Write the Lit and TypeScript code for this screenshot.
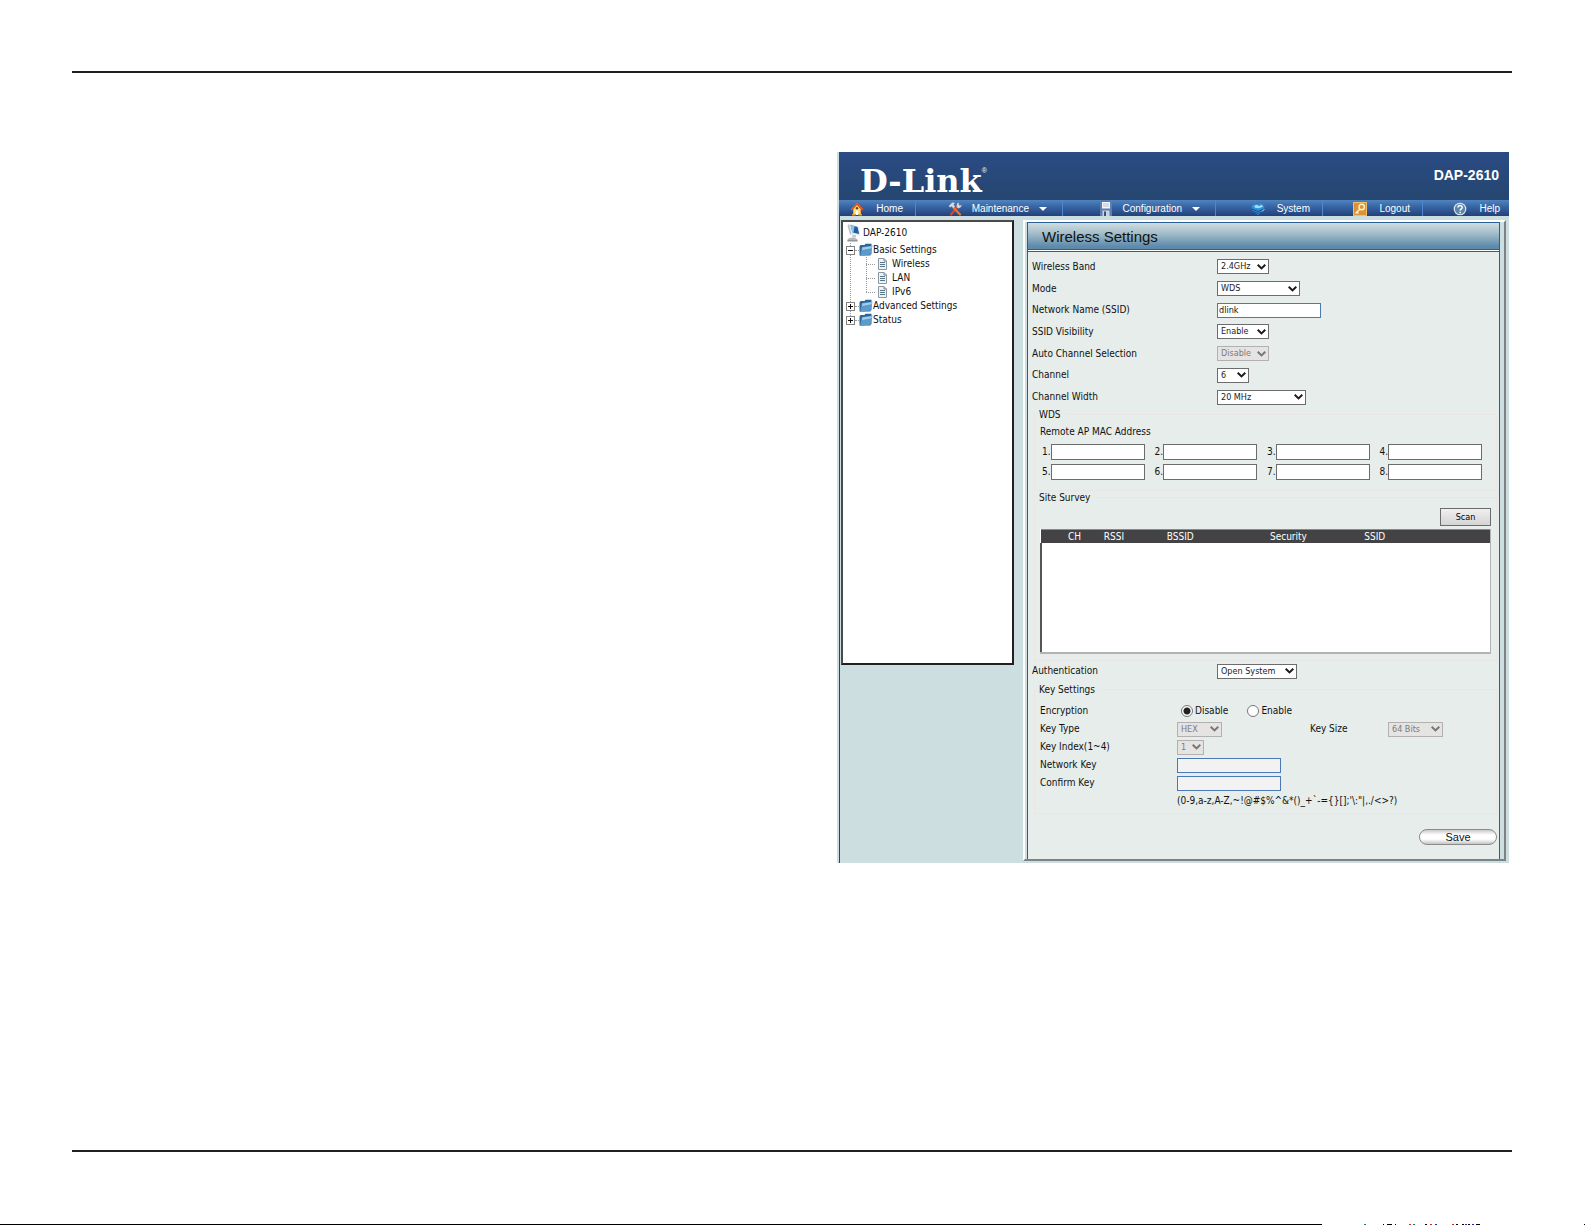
import { LitElement, html, css, svg, nothing } from "lit";
import { customElement, property } from "lit/decorators.js";

const icons = {
  home: svg`<path d="M7 0.5 1 7h2v5h8V7h2z" fill="#e8762c"/><path d="M7 3 3.5 7v5h7V7z" fill="#f8e06a"/><path d="M7 .6 .6 7.200l1.200 1.200L7 3l5.200 5.400 1.200-1.200z" fill="#e2552c"/><circle cx="7" cy="6.200" r="1.200" fill="#7a3a1c"/><path d="M5.700 8.500h2.600V13H5.700z" fill="#fff"/><path d="M2 12h3.700v1.400H2zM8.300 12H12v1.400H8.300z" fill="#e8a23c"/>`,
  tools: svg`<path d="M10.500 3.500 3 12.500" stroke="#d8432a" stroke-width="2.200" stroke-linecap="round"/><path d="m4 4 8 8.500" stroke="#e8762c" stroke-width="2.200" stroke-linecap="round"/><path d="m.8 4 3.500-3.500L7 1 5.500 2.500 7 4.500 5.500 6 3.500 4 2 5.500z" fill="#d8dde2"/><path d="m8.500 5 .5-3.500 2-1-.3 2L12 3.500l1.700-.7-.7 2.200-2.500 1.500z" fill="#cfd6dc"/>`,
  disk: svg`<path d="M1 0h12v14H1z" fill="#5b7fb5"/><path d="M3 0h8v6.500H3z" fill="#f2f4f6"/><path d="M4 2h6M4 4h6" stroke="#b8c2cc"/><path d="M3.500 8.500h7V14h-7z" fill="#d0d4d8"/><path d="M5 9.500h2V14H5z" fill="#34507c"/>`,
  system: svg`<path d="M.5 4 4.500 1.500l2.500 1 3.500-1.500 3 3-1 5L7 13 2 9.500z" fill="#2f8fd4"/><path d="M3 4 6 2.800l2 1.500 2.500-1.500 1.500 2-4 1.500-4-.5z" fill="#a6dcf6"/><path d="m1 7 6 2.500L13 7M2.500 9.500l4.500 2 4.500-2" stroke="#174f96" fill="none"/><path d="M11 9.500 13.500 7" stroke="#a6dcf6"/>`,
  key: svg`<path d="M0 0h14v14H0z" fill="#dd9330"/><path d="M.5 .5h13v13H.5z" fill="none" stroke="#f3bf6d"/><circle cx="8.700" cy="5" r="2.700" fill="none" stroke="#fff3d8" stroke-width="1.400"/><path d="m7 7-4.500 4.500M4 10l1.500 1.500" stroke="#fff3d8" stroke-width="1.400"/>`,
  help: svg`<circle cx="7" cy="7" r="6.300" fill="#e4edf4"/><circle cx="7" cy="7" r="5.200" fill="#5d86ab"/><path d="M5 5.500C5 3 9.200 3 9.200 5.400 9.200 7 7.200 6.800 7.200 8.600M7.200 9.800v1.500" stroke="#fff" stroke-width="1.500" fill="none"/>`,
  computer: svg`<path d="m2 0 9.500 2.500L13.500 12l-9-2z" fill="#e4ecf2"/><path d="m3.500 1 7 2 1.700 7L5.500 8.500z" fill="#1f5f9f"/><path d="m3.500 1 4 1.200-1 6.500-1-.2z" fill="#8fc4ea"/><path d="m.5 1.500 1.500-1.500 2.500 10-1.500 1z" fill="#b4c4d2"/><path d="m5 10.500 4 1v2l-3.500-.5z" fill="#c2c6ca"/><path d="M.5 15.500C2 13 8 12.500 10.500 15.500V17H.5z" fill="#b4b8bc"/><path d="M.5 16h10v1.500H.5z" fill="#90969c"/>`,
  folder: svg`<path d="M.5 3.500 1.500 2h4l1-1.200h6V11L11 12.500H.5z" fill="#2c6595"/><path d="M3 4 13.500 2.500 11.500 11.800 1 13z" fill="#5b9aca"/><path d="M3.500 4.600 13 3.200l-.4 2L3 7z" fill="#a3cdea"/>`,
  page: svg`<path d="M1.500 .5h5.500L9.500 3v8.500h-8z" fill="#eef2f5" stroke="#8b98a4"/><path d="M7 .5V3h2.500" fill="none" stroke="#7b8894"/><path d="M3 4.500h5M3 6.500h5M3 8.500h5" stroke="#5a7488"/>`,
};

const UI = css`"DejaVu Sans Condensed", "DejaVu Sans", sans-serif`;

@customElement("ui-select")
class UiSelect extends LitElement {
  @property() value = "";
  @property() label = "";
  @property({ type: Boolean }) disabled = false;
  static styles = css`
    :host { display: inline-grid; grid-template: 15px / 100%; align-items: center; }
    select { grid-area: 1 / 1; width: 100%; height: 15px; box-sizing: border-box; appearance: none; margin: 0;
      padding: 0 0 0 3px; border: 1px solid #6c6c6c; border-radius: 0; background: #fff; color: #222;
      font: 9px/13px ${UI}; }
    select:disabled { background: #e6e4e3; border-color: #b2b0b0; color: #7b7b7b; opacity: 1; }
    svg { grid-area: 1 / 1; justify-self: end; margin-right: 3px; width: 9px; height: 6px; pointer-events: none; fill: none; stroke: #1c1c1c; stroke-width: 2; }
    :host([disabled]) svg { stroke: #777; }
  `;
  render() {
    return html`<select aria-label=${this.label} ?disabled=${this.disabled}><option>${this.value}</option></select>
      <svg viewBox="0 0 9 6"><path d="M.7 .7 4.500 4.400 8.300 .7" /></svg>`;
  }
}

@customElement("app-nav")
class AppNav extends LitElement {
  static styles = css`
    :host { display: block; }
    nav { display: grid; grid-template-columns: 77fr 147fr 153fr 107fr 100fr 86fr; height: 16px;
      background: linear-gradient(#5284c0, #3767a5 40%, #24407a); font: 10px/14px "Liberation Sans", Arial, sans-serif; }
    a { display: flex; align-items: center; justify-content: flex-end; gap: 12px; padding: 1px 12px 0 0; color: #fff; text-decoration: none;
      border-right: 1px solid #4f86cf; box-sizing: border-box; }
    a:last-child { border: 0; padding-right: 9px; }
    a.menu { padding-right: 15px; gap: 10px; }
    svg { width: 14px; height: 14px; }
    .caret { border: 4px solid transparent; border-top-color: #fff; border-bottom: 0; }
  `;
  render() {
    const items: [string, unknown, boolean][] = [
      ["Home", icons.home, false], ["Maintenance", icons.tools, true], ["Configuration", icons.disk, true],
      ["System", icons.system, false], ["Logout", icons.key, false], ["Help", icons.help, false],
    ];
    return html`<nav>${items.map(([name, icon, menu]) => html`
      <a href="#" class=${menu ? "menu" : ""}><svg viewBox="0 0 14 14">${icon}</svg><span>${name}</span>${menu ? html`<i class="caret"></i>` : nothing}</a>`)}</nav>`;
  }
}

@customElement("app-tree")
class AppTree extends LitElement {
  static styles = css`
    :host { display: block; box-sizing: border-box; background: #fff; border: 2px solid #231f20; border-top-color: #4a4a4a; border-left-color: #4a4a4a;
      padding: 1px 3px; font: 10px/14px ${UI}; color: #111; }
    ul { list-style: none; margin: 0; padding: 0; }
    .root { display: flex; align-items: center; height: 20px; gap: 2px; padding-left: 1px; }
    .root svg { width: 14px; height: 18px; }
    .level { background: repeating-linear-gradient(#999 0 1px, transparent 1px 2px) 4px 0 / 1px calc(100% - 7px) no-repeat; }
    .row { display: flex; align-items: center; height: 14px; }
    .box { width: 9px; height: 9px; box-sizing: border-box; border: 1px solid #848484; padding: 0; background: #fff; display: grid; place-items: center; }
    .box svg { width: 5px; height: 5px; stroke: #111; }
    .dash { width: 4px; border-top: 1px dotted #999; }
    .row > svg { width: 14px; height: 14px; }
    a { color: inherit; text-decoration: none; }
    .leaves { margin-left: 20px; background: repeating-linear-gradient(#999 0 1px, transparent 1px 2px) 0 0 / 1px calc(100% - 7px) no-repeat; }
    .leaves li { display: flex; align-items: center; height: 14px; }
    .leaves .dash { width: 9px; margin-right: 2px; }
    .leaves svg { width: 11px; height: 12px; margin-right: 4px; }
  `;
  private branch(name: string, leaves: string[] = []) {
    return html`<li>
      <div class="row">
        <button class="box" aria-label=${"Toggle " + name}><svg viewBox="0 0 5 5"><path d=${leaves.length ? "M0 2.500h5" : "M0 2.500h5M2.500 0v5"} /></svg></button>
        <span class="dash"></span><svg viewBox="0 0 14 14">${icons.folder}</svg><a href="#">${name}</a>
      </div>
      ${leaves.length ? html`<ul class="leaves">${leaves.map((l) => html`<li><span class="dash"></span><svg viewBox="0 0 11 12">${icons.page}</svg><a href="#">${l}</a></li>`)}</ul>` : nothing}
    </li>`;
  }
  render() {
    return html`<div class="root"><svg viewBox="0 0 14 18">${icons.computer}</svg><a href="#">DAP-2610</a></div>
      <ul class="level">${this.branch("Basic Settings", ["Wireless", "LAN", "IPv6"])}${this.branch("Advanced Settings")}${this.branch("Status")}</ul>`;
  }
}

@customElement("wireless-settings")
class WirelessSettings extends LitElement {
  static styles = css`
    :host { display: block; box-sizing: border-box; border: 2px solid; border-color: #fff #7d8385 #7d8385 #fff; padding: 0 4px 0 2px;
      font: 10px/12px ${UI}; color: #111; }
    form { margin: 0; background: #e6edea; border: solid #2a5f95; border-width: 0 1px; box-sizing: border-box; padding-bottom: 14px; }
    h1 { margin: 0; border-top: 1px solid #2a5f95; border-bottom: 3px double #2a5f95; padding: 1px 0 0 14px;
      font: 15px/25px "Liberation Sans", Arial, sans-serif; background: linear-gradient(#cfdde0, #a9c2cd 35%, #5e8bab 90%) padding-box, #fff; }
    .fields { display: grid; grid-auto-rows: 1fr; min-height: 152px; padding: 4px 0 0 4px; }
    .field { display: grid; grid-template-columns: 185px 1fr; align-items: center; }
    .auth { height: 20px; padding-left: 4px; }
    .w27 { width: 27px; } .w32 { width: 32px; } .w45 { width: 45px; } .w52 { width: 52px; } .w55 { width: 55px; }
    .w80 { width: 80px; } .w83 { width: 83px; } .w89 { width: 89px; } .w104 { width: 104px; }
    input:not([type="radio"]) { box-sizing: border-box; height: 15px; margin: 0; padding: 0 1px; border: 1px solid #4a79b5; border-radius: 0; background: #fff; color: #111; font: 9px/13px ${UI}; }
    input:disabled:not([type="radio"]) { background: #f2f2f2; }
    fieldset { margin: 0 2px 0 6px; padding: 0 5px; border: 1px solid #e9e6e5; min-width: 0; }
    legend { padding: 1px 4px 0 3px; margin-left: -4px; }
    .remote { margin: 5px 0 6px; }
    .macs { display: grid; grid-template-columns: repeat(4, minmax(0, 1fr)); gap: 4px 10px; padding: 0 9px 10px 2px; }
    .mac { display: flex; align-items: center; min-width: 0; }
    .mac input:not([type="radio"]) { flex: 1; width: 0; min-width: 0; height: 16px; border-color: #6c6c6c; }
    .survey { display: flex; flex-direction: column; gap: 3px; padding: 4px 0 6px; }
    .scan { align-self: flex-end; width: 51px; height: 18px; box-sizing: border-box; border: 1px solid #6c6c6c; border-radius: 0; padding: 0; background: linear-gradient(#f0f0f0, #d4d4d4); font: 9px/14px ${UI}; }
    .results { height: 125px; box-sizing: border-box; background: #fff; border: solid #b3b3b3; border-width: 0 1px 2px 0; }
    table { width: 100%; height: 100%; border-collapse: collapse; table-layout: fixed; }
    th { height: 13px; padding: 0; background: #434345; border-top: 1px solid #8a8a8a; color: #fff; font-weight: 400; line-height: 12px; text-align: left; }
    td { padding: 0; border-left: 2px solid #555; }
    .key { display: grid; grid-template-columns: 137px 211px 1fr; grid-auto-rows: 18px; align-items: center; padding: 6px 0 3px; }
    .keys { margin-top: 2px; }
    .size { display: flex; align-items: center; justify-content: space-between; }
    .sizelabel { width: 78px; }
    .radios { display: flex; gap: 19px; padding-left: 4px; }
    .radios label { display: flex; align-items: center; gap: 2px; }
    input[type="radio"] { appearance: none; width: 12px; height: 12px; margin: 0; box-sizing: border-box; border: 1px solid #777; border-radius: 50%; background: #fff; }
    input[type="radio"]:checked { background: radial-gradient(circle, #222 0 3px, #fff 4px); }
    .hint { grid-column: 2 / -1; white-space: nowrap; }
    .actions { display: flex; justify-content: flex-end; padding: 15px 2px 0 0; }
    .save { width: 78px; height: 16px; box-sizing: border-box; border: 1px solid #8b8b8b; border-radius: 8px; padding: 0; color: #111;
      background: linear-gradient(#c9c9c9, #fff 35%, #fff 65%, #c4c4c4); font: 11px/14px "Liberation Sans", Arial, sans-serif; }
  `;
  private pick(label: string, value: string, w: string, disabled = false) {
    return html`<div class="field"><span>${label}</span><ui-select class=${w} .label=${label} .value=${value} ?disabled=${disabled}></ui-select></div>`;
  }
  render() {
    return html`<form>
      <h1>Wireless Settings</h1>
      <div class="fields">
        ${this.pick("Wireless Band", "2.4GHz", "w52")}
        ${this.pick("Mode", "WDS", "w83")}
        <div class="field"><label for="ssid">Network Name (SSID)</label><input id="ssid" class="w104" value="dlink" /></div>
        ${this.pick("SSID Visibility", "Enable", "w52")}
        ${this.pick("Auto Channel Selection", "Disable", "w52", true)}
        ${this.pick("Channel", "6", "w32")}
        ${this.pick("Channel Width", "20 MHz", "w89")}
      </div>
      <fieldset>
        <legend>WDS</legend>
        <div class="remote">Remote AP MAC Address</div>
        <div class="macs">${[1, 2, 3, 4, 5, 6, 7, 8].map((n) => html`<label class="mac">${n}.<input /></label>`)}</div>
      </fieldset>
      <fieldset>
        <legend>Site Survey</legend>
        <div class="survey">
          <button type="button" class="scan">Scan</button>
          <div class="results"><table>
            <colgroup><col width="6%" /><col width="8%" /><col width="14%" /><col width="23%" /><col width="21%" /><col /></colgroup>
            <thead><tr><th></th><th>CH</th><th>RSSI</th><th>BSSID</th><th>Security</th><th>SSID</th></tr></thead>
            <tbody><tr><td colspan="6"></td></tr></tbody>
          </table></div>
        </div>
      </fieldset>
      <div class="field auth"><span>Authentication</span><ui-select class="w80" label="Authentication" value="Open System"></ui-select></div>
      <fieldset class="keys">
        <legend>Key Settings</legend>
        <div class="key">
          <span>Encryption</span>
          <div class="radios"><label><input type="radio" name="enc" checked />Disable</label><label><input type="radio" name="enc" />Enable</label></div><span></span>
          <span>Key Type</span>
          <div class="size"><ui-select class="w45" label="Key Type" value="HEX" disabled></ui-select><span class="sizelabel">Key Size</span></div>
          <ui-select class="w55" label="Key Size" value="64 Bits" disabled></ui-select>
          <span>Key Index(1~4)</span><ui-select class="w27" label="Key Index" value="1" disabled></ui-select><span></span>
          <label for="nk">Network Key</label><input id="nk" class="w104" disabled /><span></span>
          <label for="ck">Confirm Key</label><input id="ck" class="w104" disabled /><span></span>
          <span class="hint">${"(0-9,a-z,A-Z,~!@#$%^&*()_+`-={}[];'\\:\"|,./<>?)"}</span>
        </div>
      </fieldset>
      <div class="actions"><button type="button" class="save">Save</button></div>
    </form>`;
  }
}

@customElement("app-root")
class AppRoot extends LitElement {
  static styles = css`
    :host { display: flex; flex-direction: column; box-sizing: border-box; min-height: 100vh; padding-top: 71px; background: #fff; }
    .rule { margin: 0 73px 0 72px; border: 0; border-top: 2px solid #231f20; }
    .page { flex: 1; display: grid; grid-template-columns: 765fr 672fr; align-items: start; padding: 79px 76px 0 72px; }
    .device { grid-column: 2; background: #cddee1; padding-left: 2px; }
    header { display: flex; justify-content: space-between; align-items: flex-start; height: 48px; box-sizing: border-box; padding: 11px 10px 0 21px;
      background: linear-gradient(#2b4b85, #24466f); color: #fff; }
    .logo { display: flex; font: bold 32px/36px "DejaVu Serif", "Liberation Serif", serif; }
    .reg { font: 7px/16px "Liberation Sans", sans-serif; }
    .model { font: bold 14px/24px "Liberation Sans", Arial, sans-serif; }
    .body { display: grid; grid-template-columns: minmax(0, 173fr) minmax(0, 483fr); align-items: start; gap: 9px; border-left: 1px solid #1f477f; padding: 4px 3px 2px 1px; }
    app-tree { min-height: 445px; }
    .foot { display: block; width: 100%; height: 1px; margin-top: 72px; }
  `;
  render() {
    return html`<hr class="rule" />
      <main class="page"><section class="device">
        <header><div class="logo">D-Link<span class="reg">®</span></div><div class="model">DAP-2610</div></header>
        <app-nav></app-nav>
        <div class="body"><app-tree></app-tree><wireless-settings></wireless-settings></div>
      </section></main>
      <hr class="rule" />
      <svg class="foot" viewBox="0 0 1585 1" preserveAspectRatio="none">
        <path d="M0 0h1322v1H0zM1383 0h1v1h-1zM1387 0h5v1h-5zM1395 0h1v1h-1zM1425 0h2v1h-2zM1456 0h2v1h-2zM1462 0h2v1h-2zM1468 0h2v1h-2zM1476 0h4v1h-4zM1584 0h1v1h-1z" fill="#000" />
        <path d="M1364 0h2v1h-2zM1413 0h2v1h-2z" fill="#1a8a3a" /><path d="M1409 0h2v1h-2zM1430 0h2v1h-2zM1452 0h2v1h-2z" fill="#d22" /><path d="M1435 0h2v1h-2zM1465 0h2v1h-2zM1472 0h2v1h-2z" fill="#22c" />
      </svg>`;
  }
}
